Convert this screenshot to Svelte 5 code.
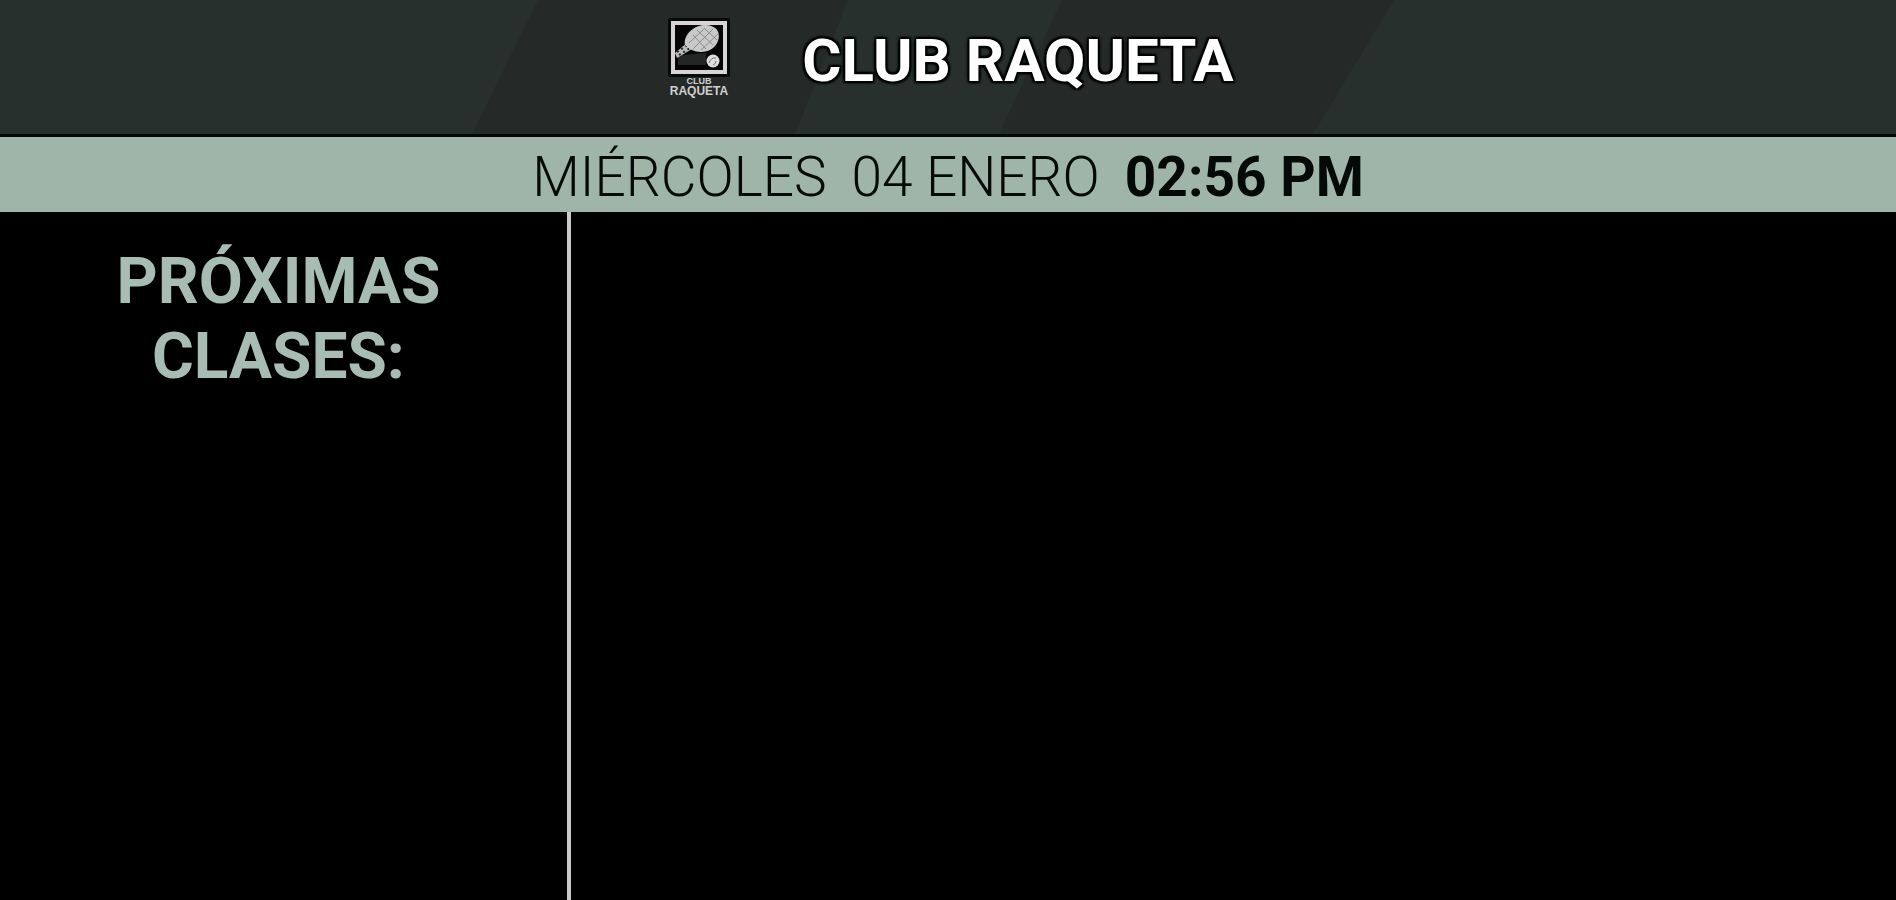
<script>
  const club = 'CLUB RAQUETA';
  const day = 'MIÉRCOLES';
  const date = '04 ENERO';
  const time = '02:56 PM';
</script>

<div class="screen">
  <header>
    <svg class="bands" viewBox="0 0 1896 136" preserveAspectRatio="none" aria-hidden="true">
      <path d="M538 0H848L795 136H472Z M1062 0H1394L1313 136H999Z" fill="#252a28" />
    </svg>
    <svg class="logo" viewBox="0 0 64 82" role="img" aria-label="Club Raqueta">
      <rect x="0" y="0" width="62" height="59" rx="2" fill="#080a09" />
      <rect x="5" y="5" width="52" height="49" fill="#050505" stroke="#d6d4d5" stroke-width="4" />
      <path d="M10 38C20 36 29 36 38 35V47H10Z" fill="#232625" />
      <path d="M7 35L20 24L24 31L9 40Z" fill="#bcbcbc" />
      <path d="M9 34L21 26M11 37L22 30" stroke="#252525" stroke-width="2" stroke-dasharray="2 3" />
      <path d="M17 27C15 17 26 7 37 7C49 7 53 15 50 23C46 34 32 37 22 31Z" fill="#c9c9c9" />
      <path d="M25 17L38 31M29 12L45 27M36 10L49 22M21 25L37 10M25 31L45 11M33 32L50 16" stroke="#8b8b8b" stroke-width="1" />
      <circle cx="45" cy="43" r="6.5" fill="#dedede" />
      <path d="M41 45Q43 39 48 40M45 47Q48 46 48 43" fill="none" stroke="#747474" stroke-width="1" />
      <text x="31" y="66" font-size="9">CLUB</text>
      <text x="31" y="77" font-size="12">RAQUETA</text>
    </svg>
    <h1>{club}</h1>
  </header>
  <div class="datebar">
    <span>{day}</span>
    <span>{date}</span>
    <time>{time}</time>
  </div>
  <main>
    <aside><h2>PRÓXIMAS CLASES:</h2></aside>
    <section aria-label="Clases"></section>
  </main>
</div>

<style>
  :global(body) {
    margin: 0;
    background: #000;
  }
  .screen {
    display: flex;
    flex-direction: column;
    min-height: 100vh;
    background: #000;
    font-family: Roboto, sans-serif;
  }
  header {
    position: relative;
    display: flex;
    align-items: flex-start;
    justify-content: center;
    gap: 70px;
    padding: 18px 0 34px 6px;
    background: #27302d;
    border-bottom: 3px solid #030807;
  }
  .bands {
    position: absolute;
    inset: 0;
    width: 100%;
    height: 100%;
  }
  .logo {
    position: relative;
    width: 64px;
    height: 82px;
  }
  .logo text {
    font-family: "Liberation Sans", sans-serif;
    font-weight: 700;
    text-anchor: middle;
    fill: #d0d0d0;
  }
  h1, h2 {
    margin: 0;
    font-weight: 700;
  }
  h1 {
    position: relative;
    padding-top: 7px;
    color: #fff;
    font-size: 60px;
    line-height: 72px;
    text-shadow: 2px 2px 2px #000, -2px -2px 2px #000, 2px -2px 2px #000, -2px 2px 2px #000;
  }
  .datebar {
    display: flex;
    justify-content: center;
    gap: 25px;
    padding-top: 6px;
    background: #a0b5aa;
    color: #050a08;
    font-size: 55px;
    font-weight: 300;
    line-height: 69px;
  }
  time {
    font-weight: 700;
  }
  main {
    flex: 1;
    display: grid;
    grid-template-columns: calc(30% + 2px) 1fr;
  }
  aside {
    padding: 32px 10px 0 0;
    border-right: 4px solid #cbcbcb;
    text-align: center;
  }
  h2 {
    padding: 0 96px;
    color: #a7bcb2;
    font-size: 64px;
    line-height: 75px;
  }
</style>
